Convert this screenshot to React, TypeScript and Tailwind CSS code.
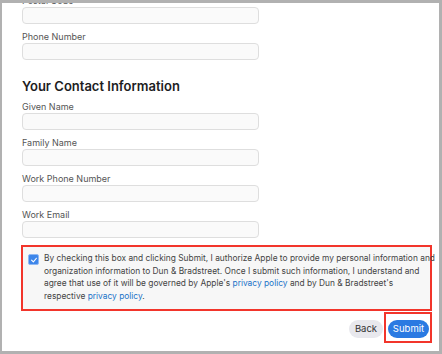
const fields = ["Phone Number"]
const contactFields = ["Given Name", "Family Name", "Work Phone Number", "Work Email"]

function Field({ label }: { label: string }) {
  return (
    <div className="flex flex-col">
      <label className="h-[12px] text-[9px] leading-[12px] text-[#555]">{label}</label>
      <div className="h-[17px] w-[237px] rounded-[4px] border border-[#dedede] bg-[#fafafa]" />
    </div>
  )
}

export default function App() {
  return (
    <div
      className="h-[354px] w-[442px] overflow-hidden border-t-[3px] border-r-[3px] border-b-[3px] border-l-2 border-[#b1b1b1] bg-white"
      style={{ fontFamily: "Inter, 'Noto Sans', sans-serif" }}
    >
      <div className="flex flex-col pl-[20px]">
        {/* top of form, scrolled */}
        <div className="-mt-[8px] flex flex-col gap-[7px]">
          <Field label="Postal Code" />
          {fields.map((f) => (
            <Field key={f} label={f} />
          ))}
        </div>

        <h2 className="mt-[18px] h-[16px] text-[13px] leading-[16px] font-semibold text-[#1d1d1f]">
          Your Contact Information
        </h2>

        <div className="mt-[7px] flex flex-col gap-[7px]">
          {contactFields.map((f) => (
            <Field key={f} label={f} />
          ))}
        </div>
      </div>

      {/* consent box */}
      <div className="mt-[7px] ml-[19px] flex w-[411px] gap-[5px] border-2 border-[#f2352b] bg-[#f7f7f7] pt-[5px] pr-[2px] pb-[6px] pl-[5px]">
        <div className="mt-[2px] flex h-[11px] w-[11px] shrink-0 items-center justify-center rounded-[2px] border border-[#8fb8f2] bg-[#3d86ea]">
          <svg viewBox="0 0 10 10" className="h-[8px] w-[8px]">
            <path d="M2 5.2 L4.2 7.3 L8 2.8" fill="none" stroke="white" strokeWidth="1.4" strokeLinecap="round" strokeLinejoin="round" />
          </svg>
        </div>
        <p className="text-[8.4px] leading-[12.7px] whitespace-nowrap text-[#444]">
          By checking this box and clicking Submit, I authorize Apple to provide my personal information and
          <br />
          organization information to Dun &amp; Bradstreet. Once I submit such information, I understand and
          <br />
          agree that use of it will be governed by Apple's <span className="text-[#1a73c8]">privacy policy</span> and
          by Dun &amp; Bradstreet's
          <br />
          respective <span className="text-[#1a73c8]">privacy policy</span>.
        </p>
      </div>

      {/* actions */}
      <div className="mt-[1px] ml-[19px] flex w-[411px] items-start justify-end gap-[1px]">
        <button className="mt-[8px] h-[18px] w-[34px] rounded-full bg-[#e8e8ed] text-[9.5px] leading-[18px] text-[#333]">
          Back
        </button>
        <div className="flex h-[31px] w-[48px] items-start border-2 border-[#f2352b] pt-[6px] pl-[2px]">
          <button className="h-[18px] w-[41px] rounded-full bg-[#2a7ae2] text-[9.5px] leading-[18px] text-white">
            Submit
          </button>
        </div>
      </div>
    </div>
  )
}
